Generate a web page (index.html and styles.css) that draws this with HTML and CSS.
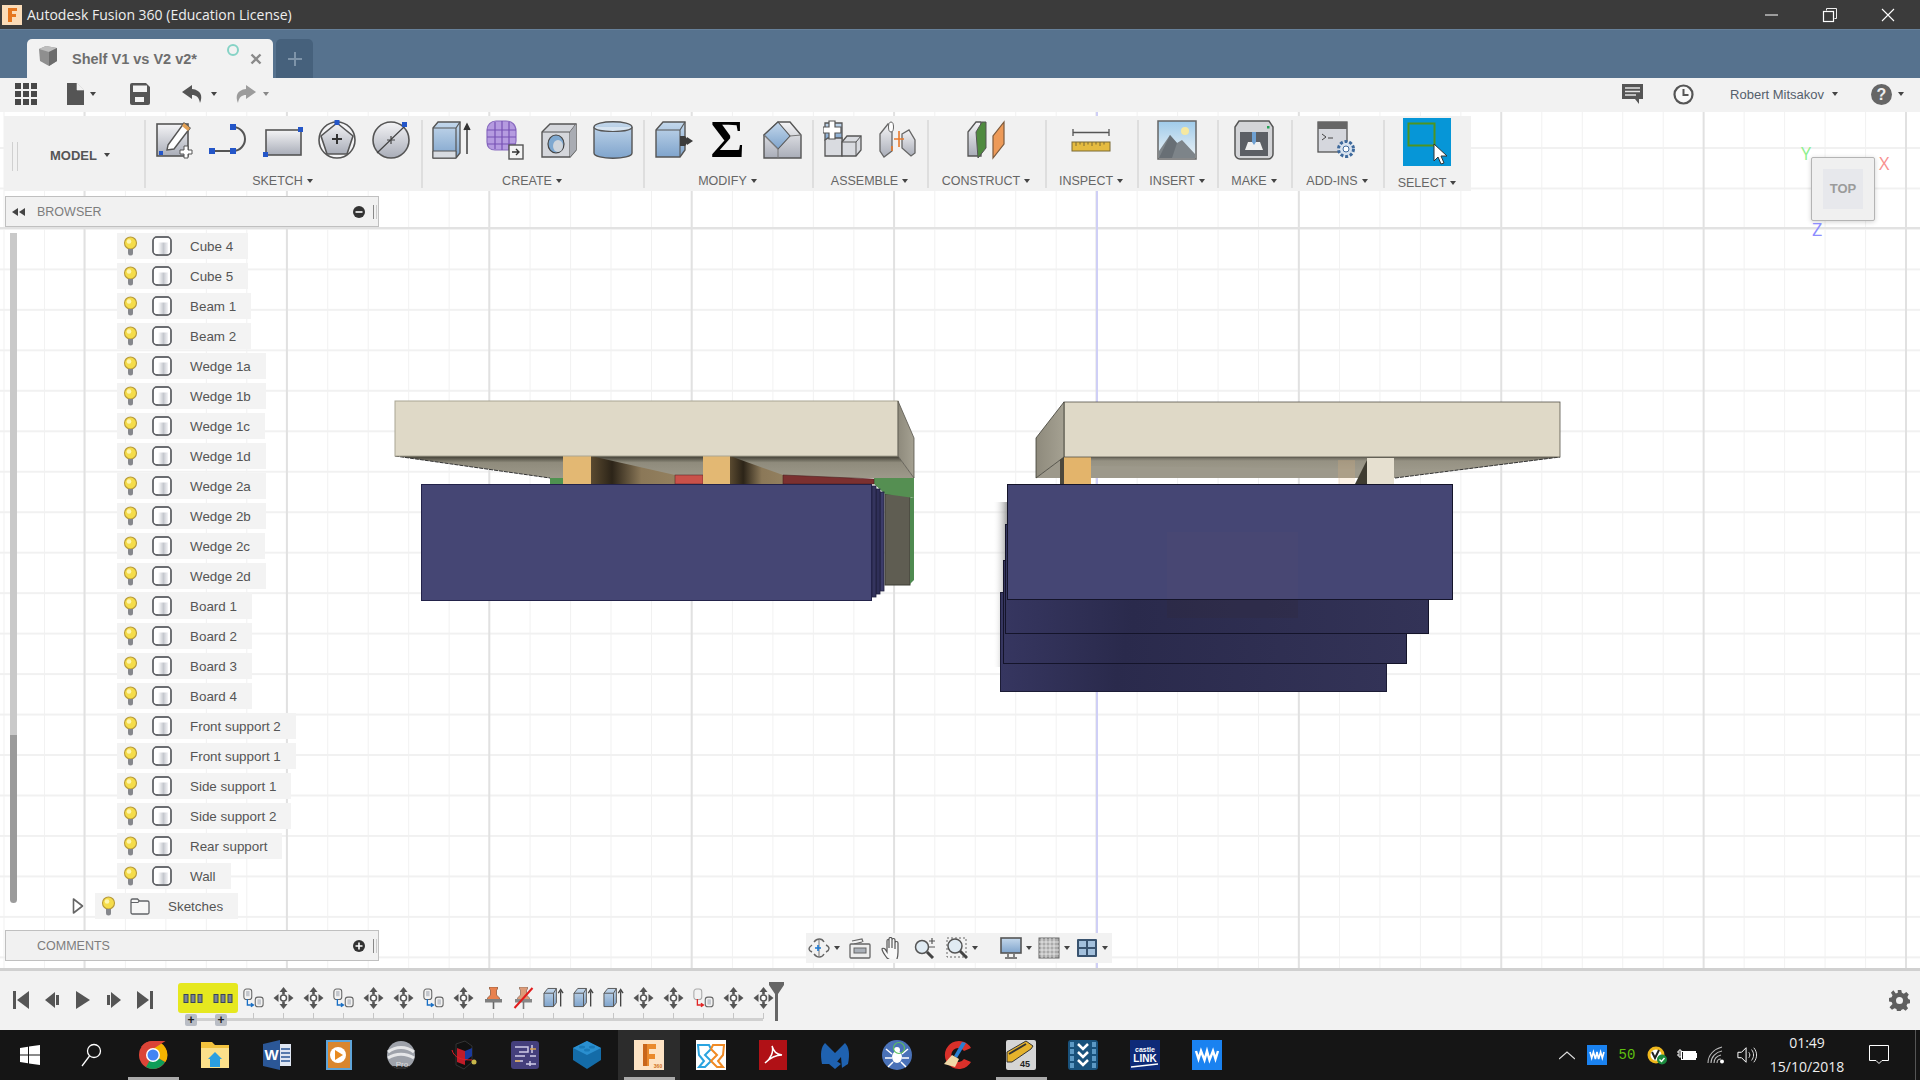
FILE: index.html
```html
<!DOCTYPE html>
<html lang="en">
<head>
<meta charset="utf-8">
<title>Autodesk Fusion 360 (Education License)</title>
<link rel="stylesheet" href="styles.css">
</head>
<body>
<svg class="defs" aria-hidden="true">
  <defs>
    <linearGradient id="gGrey" x1="0" y1="0" x2="0" y2="1"><stop offset="0" stop-color="#f4f4f6"/><stop offset="1" stop-color="#a9adb8"/></linearGradient>
    <linearGradient id="gBlue" x1="0" y1="0" x2="0" y2="1"><stop offset="0" stop-color="#c4d8ec"/><stop offset="1" stop-color="#7fa4cc"/></linearGradient>
    <linearGradient id="gBody" x1="0" y1="0" x2="1" y2="0"><stop offset="0" stop-color="#fff"/><stop offset=".55" stop-color="#c5c8ce"/><stop offset="1" stop-color="#f4f4f6"/></linearGradient>
    <linearGradient id="gSky" x1="0" y1="0" x2="0" y2="1"><stop offset="0" stop-color="#9fcbea"/><stop offset="1" stop-color="#eef3f5"/></linearGradient>
    <linearGradient id="gUnder" x1="0" y1="0" x2="0" y2="1"><stop offset="0" stop-color="#3c3a30"/><stop offset=".3" stop-color="#8f8b7c"/><stop offset="1" stop-color="#9d998a"/></linearGradient>
    <linearGradient id="gWedge" x1="0" y1="0" x2="1" y2="0"><stop offset="0" stop-color="#5a4a30"/><stop offset=".25" stop-color="#2c2418"/><stop offset=".6" stop-color="#8b7858"/><stop offset="1" stop-color="#93805f"/></linearGradient>
    <linearGradient id="gSide" x1="0" y1="0" x2="1" y2="0"><stop offset="0" stop-color="#8e8a7c"/><stop offset="1" stop-color="#a5a192"/></linearGradient>
    <linearGradient id="gBoard" x1="0" y1="0" x2="1" y2="0"><stop offset="0" stop-color="#363660"/><stop offset=".3" stop-color="#2a2a4c"/><stop offset="1" stop-color="#333357"/></linearGradient>
    <linearGradient id="gShadow" x1="0" y1="0" x2="1" y2="0"><stop offset="0" stop-color="#fff" stop-opacity="0"/><stop offset="1" stop-color="#888" stop-opacity=".8"/></linearGradient>

    <symbol id="i-bulb" viewBox="0 0 15 20"><circle cx="7.500" cy="7" r="6" fill="#f5dc4a" stroke="#b79a3a" stroke-width="1.100"/><circle cx="6" cy="5.500" r="2.300" fill="#fdf6b0"/><path d="M5 13h5v4a2.500 2.500 0 0 1-5 0z" fill="#85878c"/></symbol>
    <symbol id="i-body" viewBox="0 0 20 20"><rect x="1" y="1" width="18" height="18" rx="4" fill="#fff" stroke="#626468" stroke-width="1.4"/><path d="M6 6.5h10v10a2 2 0 0 1-2 2H6z" fill="url(#gBody)"/><rect x="1" y="1" width="18" height="18" rx="4" fill="none" stroke="#626468" stroke-width="1.4"/></symbol>
    <symbol id="i-folder" viewBox="0 0 20 18"><path d="M1 3.5a1.5 1.5 0 0 1 1.5-1.5h5l2 2h8a1.5 1.5 0 0 1 1.5 1.5v10a1.5 1.5 0 0 1-1.5 1.5h-15a1.5 1.5 0 0 1-1.5-1.5z" fill="#f6f6f6" stroke="#626468" stroke-width="1.3"/><path d="M1 5.5h7l1-1.5" fill="none" stroke="#626468" stroke-width="1.1"/></symbol>
    <symbol id="i-move" viewBox="0 0 20 22"><g fill="#555"><path d="M10 0l4 5h-8z"/><path d="M10 22l4-5h-8z"/><path d="M0 11l5-4v8z"/><path d="M20 11l-5-4v8z"/><rect x="8.7" y="4" width="2.6" height="3.5"/><rect x="8.7" y="14.5" width="2.6" height="3.5"/></g><circle cx="10" cy="11" r="3" fill="#fff" stroke="#555" stroke-width="1.5"/></symbol>
    <symbol id="i-joint" viewBox="0 0 24 22"><rect x="1" y="0.8" width="9" height="12" rx="3" fill="#f2f2f2" stroke="#666" stroke-width="1.2"/><rect x="3.5" y="3" width="4" height="6" fill="#c4c7cd"/><rect x="14" y="10" width="9" height="11" rx="3" fill="#f2f2f2" stroke="#666" stroke-width="1.2"/><rect x="16.5" y="12.5" width="4" height="6" fill="#c4c7cd"/><path d="M5 12v7h6M9 17l3 2-3 2" fill="none" stroke="#1a6fc4" stroke-width="1.5"/></symbol>
    <symbol id="i-joint-r" viewBox="0 0 24 22"><rect x="1" y="0.8" width="9" height="12" rx="3" fill="#f2f2f2" stroke="#a9a9a9" stroke-width="1.2"/><rect x="14" y="10" width="9" height="11" rx="3" fill="#f2f2f2" stroke="#666" stroke-width="1.2"/><rect x="16.5" y="12.5" width="4" height="6" fill="#c4c7cd"/><path d="M5 12v7h6M9 17l3 2-3 2" fill="none" stroke="#e12525" stroke-width="1.5"/></symbol>
    <symbol id="i-pin" viewBox="0 0 20 22"><path d="M6 0h8v2l-1 1v5l3 3v2H4v-2l3-3V3L6 2z" fill="#e8814e" stroke="#8f5b3c" stroke-width=".8"/><rect x="1.5" y="12" width="17" height="3.5" fill="#7e7e7e"/><rect x="9.2" y="15" width="1.6" height="7" fill="#666"/></symbol>
    <symbol id="i-pinx" viewBox="0 0 20 22"><path d="M6 0h8v2l-1 1v5l3 3v2H4v-2l3-3V3L6 2z" fill="#dd9a77" stroke="#8f7363" stroke-width=".8"/><rect x="1.5" y="12" width="17" height="3.5" fill="#888"/><rect x="9.2" y="15" width="1.6" height="7" fill="#777"/><path d="M1 21L19 1" stroke="#e21c1c" stroke-width="2"/></symbol>
    <symbol id="i-box" viewBox="0 0 22 22"><path d="M1 6l4-5h9v15l-3 4H1z" fill="url(#gBlue)" stroke="#555" stroke-width="1"/><path d="M1 6h10l3-5M11 6v14" fill="none" stroke="#555" stroke-width="1"/><path d="M18.5 20V4M16 6l2.5-4 2.5 4" fill="none" stroke="#444" stroke-width="1.4"/></symbol>
    <symbol id="i-seq" viewBox="0 0 20 9"><g fill="#7c8496" stroke="#37445a" stroke-width="1"><rect x="1" y=".5" width="4" height="8"/><rect x="8" y=".5" width="4" height="8"/><rect x="15" y=".5" width="4" height="8"/></g></symbol>
    <symbol id="i-gear" viewBox="0 0 24 24"><path fill="#5f5f5f" fill-rule="evenodd" d="M10 0h4l.7 3.2 2.3 1 2.8-1.8 2.8 2.8L21 8l1 2.3 2 .7v4l-3 .7-1 2.3 1.8 2.8-2.8 2.8-2.8-1.8-2.3 1-.7 2h-4l-.7-3-2.3-1-2.8 1.8-2.8-2.8L4 16l-1-2.3-3-.7v-4l3-.7 1-2.3-1.8-2.8 2.8-2.8L7.8 4l2.3-1zM12 8a4 4 0 1 0 0 8 4 4 0 0 0 0-8z"/></symbol>
  </defs>
</svg>

<div class="app">
  <header class="titlebar">
    <svg class="title-logo" viewBox="0 0 20 20"><rect width="20" height="20" fill="#fbdcb8"/><path d="M6 3h9v3H10v3h4v3h-4v5H6z" fill="#e5761e"/></svg>
    <span class="title-text">Autodesk Fusion 360 (Education License)</span>
    <div class="win-controls">
      <svg class="win-btn" viewBox="0 0 16 16"><path d="M1 8h13" stroke="#fff" stroke-width="1"/></svg>
      <svg class="win-btn" viewBox="0 0 16 16"><path d="M4.5 3.5V1.5h10v10h-2" fill="none" stroke="#eee"/><rect x="1.5" y="4.5" width="10" height="10" fill="none" stroke="#fff" stroke-width="1.2"/></svg>
      <svg class="win-btn" viewBox="0 0 16 16"><path d="M2 2l12 12M14 2L2 14" stroke="#fff" stroke-width="1.1"/></svg>
    </div>
  </header>

  <div class="tabbar">
    <div class="tab">
      <svg class="tab-cube" viewBox="0 0 22 22"><path d="M2 4l7-3 11 2v13l-8 5-9-5z" fill="#8f8f8f"/><path d="M2 4l10 3 8-4-11-2z" fill="#bdbdbd"/><path d="M12 7l8-4v13l-8 5z" fill="#6c6c6c"/></svg>
      <span class="tab-name">Shelf V1 vs V2 v2*</span>
      <span class="tab-ring"></span>
      <svg class="tab-close" viewBox="0 0 12 12"><path d="M1.5 1.5l9 9M10.5 1.5l-9 9" stroke="#8a8a8a" stroke-width="2.4"/></svg>
    </div>
    <div class="tab-new">
      <svg viewBox="0 0 14 14" class="tab-plus"><path d="M7 0v14M0 7h14" stroke="#7e94a9" stroke-width="2"/></svg>
    </div>
  </div>

  <div class="quickbar">
    <svg class="q-grid" viewBox="0 0 22 22"><path fill="#484848" d="M0 0h6v6H0zM8 0h6v6H8zM16 0h6v6h-6zM0 8h6v6H0zM8 8h6v6H8zM16 8h6v6h-6zM0 16h6v6H0zM8 16h6v6H8zM16 16h6v6h-6z"/></svg>
    <svg class="q-file" viewBox="0 0 17 22"><path fill="#555" d="M0 0h10l7 7v15H0z"/><path fill="#f2f2f2" d="M10 0v7h7z" stroke="#f2f2f2" stroke-width=".6"/></svg>
    <i class="caret caret-file"></i>
    <svg class="q-save" viewBox="0 0 20 22"><path fill="#555" d="M2 0h14l4 4v16a2 2 0 0 1-2 2H2a2 2 0 0 1-2-2V2a2 2 0 0 1 2-2z"/><rect x="3" y="2.5" width="14" height="6.5" fill="#f2f2f2"/><rect x="5" y="14" width="9" height="5" fill="#f2f2f2"/></svg>
    <svg class="q-undo" viewBox="0 0 22 18"><path fill="#555" d="M10 0L0 7l10 7v-4c4 0 7 2 8 8 3-7 1-13-8-14z"/></svg>
    <i class="caret caret-undo"></i>
    <svg class="q-redo" viewBox="0 0 22 18"><path fill="#9c9c9c" d="M12 0l10 7-10 7v-4C8 10 5 12 4 18 1 11 3 5 12 4z"/></svg>
    <i class="caret caret-redo"></i>
    <div class="q-right">
      <svg class="q-comment" viewBox="0 0 21 20"><path fill="#555" d="M0 0h21v15h-4v5l-4-5H0z"/><path d="M3 4h15M3 7.5h15M3 11h11" stroke="#e4e4e4" stroke-width="1.3"/></svg>
      <svg class="q-clock" viewBox="0 0 21 21"><circle cx="10.5" cy="10.5" r="9" fill="#f8f8f8" stroke="#555" stroke-width="2.2"/><path d="M10.5 5v6h5" fill="none" stroke="#555" stroke-width="2"/></svg>
      <span class="user-name">Robert Mitsakov</span>
      <i class="caret caret-user"></i>
      <span class="help">?</span>
      <i class="caret caret-help"></i>
    </div>
  </div>

  <main class="canvas">
    <svg class="model" viewBox="0 112 1920 856">
      <!-- left view -->
      <path d="M395 456H898L914 478H550z" fill="url(#gUnder)"/>
      <path d="M395 456L550 478" stroke="#333" stroke-width="1" stroke-dasharray="4 1"/>
      <rect x="885" y="494" width="25" height="91" fill="#5f5d52" stroke="#3f3e35"/>
      <path d="M910 498h4v82l-4 4z" fill="#4f8a50"/>
      <path d="M874 478L914 478V498L885 494L874 484z" fill="#558f52"/>
      <rect x="550" y="478" width="13" height="6" fill="#4f9250"/>
      <path d="M591 456L675 475V484H591z" fill="url(#gWedge)"/>
      <path d="M730 456L783 475V484H730z" fill="url(#gWedge)"/>
      <rect x="675" y="475" width="28" height="9" fill="#c9514a" stroke="#5c2b28" stroke-width=".6"/>
      <path d="M783 475L874 479V484H783z" fill="#7b3030" stroke="#4a2020" stroke-width=".6"/>
      <rect x="563" y="456" width="28" height="28" fill="#e3b873"/>
      <rect x="703" y="456" width="27" height="28" fill="#e3b873"/>
      <rect x="395" y="401" width="503" height="55" fill="#dfd9c7" stroke="#a9a594" stroke-width="1"/>
      <path d="M898 401L914 438V478L898 456z" fill="url(#gSide)" stroke="#55534a" stroke-width=".8"/>
      <rect x="880" y="492" width="4" height="99" fill="#3c3c6a" stroke="#1f1f3e" stroke-width=".8"/>
      <rect x="876" y="489" width="4" height="105" fill="#2f2f58" stroke="#1f1f3e" stroke-width=".8"/>
      <rect x="872" y="486" width="4" height="111" fill="#34345e" stroke="#1f1f3e" stroke-width=".8"/>
      <rect x="421.500" y="484.500" width="450" height="116" fill="#454674" stroke="#23234a"/>

      <!-- right view -->
      <rect x="993" y="502" width="14" height="165" fill="url(#gShadow)"/>
      <path d="M1036 478L1064 457H1560L1395 478z" fill="#9d998b"/>
      <path d="M1064 457H1560L1460 470L1091 466z" fill="url(#gUnder)" opacity=".55"/>
      <path d="M1395 478L1560 457" stroke="#333" stroke-width="1" stroke-dasharray="4 1"/>
      <path d="M1064 457L1091 457V466L1064 466z" fill="#4a463a"/>
      <path d="M1338 460H1355V484H1338z" fill="#e9b97d" opacity=".2"/>
      <path d="M1355 484L1367 460V484z" fill="#3f3c31"/>
      <rect x="1060" y="457" width="4" height="27" fill="#4c483c"/>
      <rect x="1064" y="457" width="27" height="27" fill="#e3b46b"/>
      <rect x="1367" y="458" width="27" height="26" fill="#e6e0d0"/>
      <rect x="1064" y="402" width="496" height="55" fill="#dfd9c7" stroke="#55534a" stroke-width=".8"/>
      <path d="M1064 402L1036 438V478L1064 457z" fill="url(#gSide)" stroke="#3e3c34" stroke-width=".8"/>
      <rect x="1000.500" y="592.500" width="386" height="99" fill="url(#gBoard)" stroke="#1c1c36"/>
      <rect x="1003.500" y="560.500" width="403" height="103" fill="url(#gBoard)" stroke="#14142a"/>
      <rect x="1005.500" y="524.500" width="423" height="109" fill="url(#gBoard)" stroke="#14142a"/>
      <rect x="1007.500" y="484.500" width="445" height="115" fill="#454674" stroke="#14142a"/>
      <rect x="1167" y="532" width="131" height="67" fill="#4e4c70" opacity=".3"/>
      <rect x="1167" y="600" width="131" height="18" fill="#2f2a40" opacity=".4"/>
    </svg>

    <div class="viewcube">
      <span class="axis axis-y">Y</span><span class="axis axis-x">X</span><span class="axis axis-z">Z</span>
      <span class="cube-face">TOP</span>
    </div>

    <section class="ribbon">
      <div class="group group-model">
        <span class="grip"></span>
        <span class="model-name">MODEL</span><i class="caret caret-model"></i>
      </div>
      <div class="group w-sketch">
        <div class="icons">
          <svg viewBox="0 0 40 40"><rect x="2" y="4" width="31" height="32" fill="url(#gGrey)" stroke="#555" stroke-width="1.6"/><rect x="4" y="31" width="4" height="4" fill="#2456c8"/><path d="M13 25L29 3l6 5-16 21-7 1z" fill="#fff" stroke="#555" stroke-width="1.4"/><path d="M29 3l6 5-2 3-6-5z" fill="#e2a054"/><path d="M25 30h4v-4h4v4h4v4h-4v4h-4v-4h-4z" fill="#fff" stroke="#555"/></svg>
          <svg viewBox="0 0 40 40"><path d="M3 31H24M24 7a12 12 0 0 1 0 24" fill="none" stroke="#555" stroke-width="2"/><g fill="#2456c8"><rect x="0" y="28" width="6" height="6"/><rect x="21" y="28" width="6" height="6"/><rect x="21" y="4" width="6" height="6"/></g></svg>
          <svg viewBox="0 0 40 40"><rect x="3" y="10" width="35" height="25" fill="url(#gGrey)" stroke="#555" stroke-width="1.6"/><rect x="35" y="7" width="5" height="5" fill="#2456c8"/><rect x="0" y="32" width="5" height="5" fill="#2456c8"/></svg>
          <svg viewBox="0 0 40 40"><circle cx="20" cy="20" r="18" fill="#f4f4f6" stroke="#555" stroke-width="1.6"/><path d="M20 3L36 16 30 34H10L4 16z" fill="url(#gGrey)" stroke="#555" stroke-width="1.6"/><path d="M20 14v10M15 19h10" stroke="#333" stroke-width="2"/><rect x="17.500" y="0" width="5" height="5" fill="#2456c8"/></svg>
          <svg viewBox="0 0 40 40"><circle cx="20" cy="20" r="18" fill="url(#gGrey)" stroke="#555" stroke-width="1.6"/><path d="M6 33L34 6M20 16v8M16 20h8" fill="none" stroke="#444" stroke-width="1.2"/><rect x="31" y="2" width="5" height="5" fill="#2456c8"/></svg>
        </div>
        <div class="group-label">SKETCH<i class="caret"></i></div>
      </div>
      <div class="group w-create">
        <div class="icons">
          <svg viewBox="0 0 40 40"><path d="M2 8l5-6h22v31l-4 5H2z" fill="url(#gBlue)" stroke="#555" stroke-width="1.4"/><path d="M2 8h23l4-6M25 8v30" fill="none" stroke="#555" stroke-width="1.2"/><path d="M2 31h23v7H2z" fill="#d8dce2" stroke="#555"/><path d="M36 34V6M33 10l3-6 3 6" fill="#333" stroke="#333" stroke-width="1.4"/></svg>
          <svg viewBox="0 0 40 40"><path d="M2 10c0-5 4-9 9-9h10c6 0 10 4 10 10v10c0 5-4 9-9 9H10c-5 0-8-3-8-8z" fill="#b59be0" stroke="#8a6cc0" stroke-width="1.2"/><path d="M2 10h29M2 17h29M2 24h28M10 2v27M17 1v29M24 2v28" stroke="#7752b4" stroke-width="1.2"/><rect x="24" y="25" width="14" height="14" fill="#f4f4f4" stroke="#555" stroke-width="1.4"/><path d="M27 32h7M31 29l3 3-3 3" fill="none" stroke="#333" stroke-width="1.4"/></svg>
          <svg viewBox="0 0 40 40"><path d="M3 12l8-8h26v26l-6 7H3z" fill="#d5d7dc" stroke="#555" stroke-width="1.4"/><path d="M3 12h28l6-8M31 12v25" fill="none" stroke="#555" stroke-width="1.1"/><path d="M31 12l6-8v26l-6 7z" fill="#a9acb3"/><ellipse cx="17" cy="24" rx="8" ry="9" fill="#7ea8d0" stroke="#444" stroke-width="1.2"/><ellipse cx="19" cy="26" rx="5" ry="6" fill="#cfd5dc"/></svg>
          <svg viewBox="0 0 40 40"><path d="M1 7c0-7 38-7 38 0v26c0 7-38 7-38 0z" fill="url(#gBlue)" stroke="#555" stroke-width="1.4"/><path d="M1 7c0 6 38 6 38 0" fill="#d7e4f1" stroke="#555" stroke-width="1.2"/></svg>
        </div>
        <div class="group-label">CREATE<i class="caret"></i></div>
      </div>
      <div class="group w-modify">
        <div class="icons">
          <svg viewBox="0 0 40 40"><path d="M2 10l7-8h22v28l-5 7H2z" fill="url(#gBlue)" stroke="#555" stroke-width="1.4"/><path d="M2 10h24l5-8M26 10v27" fill="none" stroke="#555" stroke-width="1.1"/><path d="M26 16h5l4 5-4 5h-5z" fill="#3c3c3c"/><path d="M33 17l6 4-6 4z" fill="#3c3c3c"/></svg>
          <span class="sigma">&#931;</span>
          <svg viewBox="0 0 40 40"><path d="M2 15L16 2h12l11 13v23H2z" fill="url(#gGrey)" stroke="#555" stroke-width="1.4"/><path d="M2 15L16 2l12 14-12 13z" fill="url(#gBlue)" stroke="#555" stroke-width="1.1"/><path d="M16 29L2 15M16 29v9M28 16L39 15" fill="none" stroke="#777"/></svg>
        </div>
        <div class="group-label">MODIFY<i class="caret"></i></div>
      </div>
      <div class="group w-assemble">
        <div class="icons">
          <svg viewBox="0 0 40 40"><path d="M2 3h17v17H2z" fill="url(#gBlue)" stroke="#555" stroke-width="1.3"/><path d="M2 20l3-2h14v18H2z" fill="#d9dbe0" stroke="#555" stroke-width="1.3"/><path d="M19 22l5-6h14v14l-5 6H19z" fill="#d9dbe0" stroke="#555" stroke-width="1.3"/><path d="M19 22h14l5-6M33 22v14" fill="none" stroke="#555"/><path d="M6 1h6v6h6v6h-6v6H6v-6H0V7h6z" fill="#fff" stroke="#555" stroke-width="1.2"/></svg>
          <svg viewBox="0 0 40 40"><path d="M3 14l8-10 4 3v24l-8 6-4-6z" fill="url(#gGrey)" stroke="#666" stroke-width="1.3"/><path d="M25 14l7-4 6 10v13l-4 3-9-8z" fill="url(#gGrey)" stroke="#666" stroke-width="1.3"/><ellipse cx="14" cy="7" rx="2.500" ry="5" fill="#fff" stroke="#666"/><path d="M22 11v16M17 19h10M15 26v5" stroke="#e87a2c" stroke-width="1.6"/></svg>
        </div>
        <div class="group-label">ASSEMBLE<i class="caret"></i></div>
      </div>
      <div class="group w-construct">
        <div class="icons">
          <svg viewBox="0 0 40 40"><path d="M2 12l8-10h5v34H2z" fill="url(#gGrey)" stroke="#555" stroke-width="1.3"/><path d="M10 12l6-10h4v26l-8 10z" fill="#4f8a3f" stroke="#555" stroke-width="1"/><path d="M27 38V16L38 2v22z" fill="#ed9a58" stroke="#7c5a3c" stroke-width="1.2"/></svg>
        </div>
        <div class="group-label">CONSTRUCT<i class="caret"></i></div>
      </div>
      <div class="group w-inspect">
        <div class="icons">
          <svg viewBox="0 0 40 40"><path d="M2 9v7M38 9v7M2 12.500h36" stroke="#555" stroke-width="1.3" fill="none"/><rect x="1" y="22" width="38" height="9" fill="#e5bb40" stroke="#7a6a35"/><path d="M5 22v4M9 22v2.500M13 22v4M17 22v2.500M21 22v4M25 22v2.500M29 22v4M33 22v2.500" stroke="#7a6a35"/></svg>
        </div>
        <div class="group-label">INSPECT<i class="caret"></i></div>
      </div>
      <div class="group w-insert">
        <div class="icons">
          <svg viewBox="0 0 40 40"><rect x="1" y="1" width="38" height="38" fill="url(#gSky)" stroke="#666" stroke-width="1.5"/><circle cx="28" cy="11" r="4" fill="#f6e8a0"/><path d="M2 38V31L13 15l7 8 5-3 13 14v4z" fill="#7d8489"/><path d="M13 15l7 8-5 15H2z" fill="#5f666c" opacity=".7"/></svg>
        </div>
        <div class="group-label">INSERT<i class="caret"></i></div>
      </div>
      <div class="group w-make">
        <div class="icons">
          <svg viewBox="0 0 40 40"><path d="M5 1h30l4 6v27a5 5 0 0 1-5 5H6a5 5 0 0 1-5-5V7z" fill="#d3d4d7" stroke="#555" stroke-width="1.5"/><path d="M6 12h28v24H6z" fill="#5c5f65"/><path d="M11 30l3-8h12l3 8z" fill="#f0f0f0"/><path d="M18 12h4v10l-2 3-2-3z" fill="#6ea0d2"/><rect x="33" y="6" width="2.500" height="2.500" fill="#22a055"/></svg>
        </div>
        <div class="group-label">MAKE<i class="caret"></i></div>
      </div>
      <div class="group w-addins">
        <div class="icons">
          <svg viewBox="0 0 40 40"><rect x="1" y="2" width="29" height="30" fill="#d5d7dd" stroke="#555" stroke-width="1.3"/><rect x="1" y="2" width="29" height="7" fill="#666"/><path d="M5 14l4 3-4 3M11 18h5" fill="none" stroke="#444"/><circle cx="29" cy="29" r="7.500" fill="#d7e2ef" stroke="#3f6a9c" stroke-width="3" stroke-dasharray="3 1.800"/><circle cx="29" cy="29" r="3" fill="#fff" stroke="#3f6a9c"/></svg>
        </div>
        <div class="group-label">ADD-INS<i class="caret"></i></div>
      </div>
      <div class="group w-select">
        <div class="icons">
          <svg class="select-icon" viewBox="0 0 48 48"><rect width="48" height="48" fill="#0696d7"/><rect x="5.500" y="5.500" width="26" height="22" fill="none" stroke="#4f9420" stroke-width="2"/><path d="M31 26v17l4-4 3 7 3-1-3-7h6z" fill="#fff" stroke="#333" stroke-width="1"/></svg>
        </div>
        <div class="group-label">SELECT<i class="caret"></i></div>
      </div>
    </section>

    <aside class="browser">
      <div class="panel-head">
        <svg class="rewind" viewBox="0 0 13 8"><path fill="#444" d="M6 0v8L0 4zM13 0v8L7 4z"/></svg>
        <span class="panel-title">BROWSER</span>
        <svg class="panel-btn" viewBox="0 0 12 12"><circle cx="6" cy="6" r="6" fill="#333"/><path d="M2.500 6h7" stroke="#fff" stroke-width="1.6"/></svg>
        <span class="panel-grip"></span>
      </div>
      <div class="tree">
        <div class="scrollbar"><span class="scroll-track"></span><span class="scroll-thumb"></span></div>
        <div class="row"><svg class="bulb"><use href="#i-bulb"/></svg><svg class="body"><use href="#i-body"/></svg><span>Cube 4</span></div>
        <div class="row"><svg class="bulb"><use href="#i-bulb"/></svg><svg class="body"><use href="#i-body"/></svg><span>Cube 5</span></div>
        <div class="row"><svg class="bulb"><use href="#i-bulb"/></svg><svg class="body"><use href="#i-body"/></svg><span>Beam 1</span></div>
        <div class="row"><svg class="bulb"><use href="#i-bulb"/></svg><svg class="body"><use href="#i-body"/></svg><span>Beam 2</span></div>
        <div class="row"><svg class="bulb"><use href="#i-bulb"/></svg><svg class="body"><use href="#i-body"/></svg><span>Wedge 1a</span></div>
        <div class="row"><svg class="bulb"><use href="#i-bulb"/></svg><svg class="body"><use href="#i-body"/></svg><span>Wedge 1b</span></div>
        <div class="row"><svg class="bulb"><use href="#i-bulb"/></svg><svg class="body"><use href="#i-body"/></svg><span>Wedge 1c</span></div>
        <div class="row"><svg class="bulb"><use href="#i-bulb"/></svg><svg class="body"><use href="#i-body"/></svg><span>Wedge 1d</span></div>
        <div class="row"><svg class="bulb"><use href="#i-bulb"/></svg><svg class="body"><use href="#i-body"/></svg><span>Wedge 2a</span></div>
        <div class="row"><svg class="bulb"><use href="#i-bulb"/></svg><svg class="body"><use href="#i-body"/></svg><span>Wedge 2b</span></div>
        <div class="row"><svg class="bulb"><use href="#i-bulb"/></svg><svg class="body"><use href="#i-body"/></svg><span>Wedge 2c</span></div>
        <div class="row"><svg class="bulb"><use href="#i-bulb"/></svg><svg class="body"><use href="#i-body"/></svg><span>Wedge 2d</span></div>
        <div class="row"><svg class="bulb"><use href="#i-bulb"/></svg><svg class="body"><use href="#i-body"/></svg><span>Board 1</span></div>
        <div class="row"><svg class="bulb"><use href="#i-bulb"/></svg><svg class="body"><use href="#i-body"/></svg><span>Board 2</span></div>
        <div class="row"><svg class="bulb"><use href="#i-bulb"/></svg><svg class="body"><use href="#i-body"/></svg><span>Board 3</span></div>
        <div class="row"><svg class="bulb"><use href="#i-bulb"/></svg><svg class="body"><use href="#i-body"/></svg><span>Board 4</span></div>
        <div class="row"><svg class="bulb"><use href="#i-bulb"/></svg><svg class="body"><use href="#i-body"/></svg><span>Front support 2</span></div>
        <div class="row"><svg class="bulb"><use href="#i-bulb"/></svg><svg class="body"><use href="#i-body"/></svg><span>Front support 1</span></div>
        <div class="row"><svg class="bulb"><use href="#i-bulb"/></svg><svg class="body"><use href="#i-body"/></svg><span>Side support 1</span></div>
        <div class="row"><svg class="bulb"><use href="#i-bulb"/></svg><svg class="body"><use href="#i-body"/></svg><span>Side support 2</span></div>
        <div class="row"><svg class="bulb"><use href="#i-bulb"/></svg><svg class="body"><use href="#i-body"/></svg><span>Rear support</span></div>
        <div class="row"><svg class="bulb"><use href="#i-bulb"/></svg><svg class="body"><use href="#i-body"/></svg><span>Wall</span></div>
        <div class="row-parent">
          <svg class="chevron" viewBox="0 0 12 18"><path d="M1.500 2v14L10.500 9z" fill="#fff" stroke="#666" stroke-width="1.6" stroke-linejoin="round"/></svg>
          <div class="row row-folder"><svg class="bulb"><use href="#i-bulb"/></svg><svg class="folder"><use href="#i-folder"/></svg><span>Sketches</span></div>
        </div>
      </div>
      <div class="panel-head">
        <span class="panel-title panel-title-plain">COMMENTS</span>
        <svg class="panel-btn" viewBox="0 0 12 12"><circle cx="6" cy="6" r="6" fill="#333"/><path d="M2.500 6h7M6 2.500v7" stroke="#fff" stroke-width="1.6"/></svg>
        <span class="panel-grip"></span>
      </div>
    </aside>

    <nav class="navbar">
      <div class="nav-btn">
        <svg viewBox="0 0 22 22"><path d="M6 5c3-4 8-4 10 0M6 17c3 4 8 4 10 0M4 8C0 11 0 13 4 15M18 8c4 2 4 5 0 7" fill="none" stroke="#666" stroke-width="1.4"/><path d="M11 3v16" stroke="#777"/><path d="M7 11h6M10 8v6" stroke="#1d78d0" stroke-width="1.6"/></svg><i class="caret"></i>
      </div>
      <div class="nav-btn gap-look">
        <svg viewBox="0 0 22 22"><path d="M3 4l10-2 1 3M5 7l8-2" fill="none" stroke="#666" stroke-width="1.2"/><rect x="1" y="7" width="20" height="14" rx="1" fill="#eee" stroke="#666" stroke-width="1.3"/><rect x="5" y="11" width="12" height="5" fill="#aab0b8" stroke="#666"/></svg>
      </div>
      <div class="nav-btn gap-hand">
        <svg viewBox="0 0 22 22"><path d="M6 21C3 17 1 14 1 12c0-1 2-1 3 0l2 3V4c0-2 2-2 2 0v7-9c0-2 3-2 3 0v9-8c0-2 3-2 3 0v9-6c0-2 3-2 3 0v9c0 5-1 8-3 11z" fill="#f8f8f8" stroke="#555" stroke-width="1.2"/></svg>
      </div>
      <div class="nav-btn gap-zoom">
        <svg viewBox="0 0 22 22"><circle cx="8" cy="10" r="6.500" fill="#e0ebf3" stroke="#555" stroke-width="1.5"/><path d="M13 15l6 6" stroke="#444" stroke-width="3"/><path d="M18 1v6M15 4h6M15 10h6" stroke="#555" stroke-width="1.2"/></svg>
      </div>
      <div class="nav-btn gap-fit">
        <svg viewBox="0 0 22 22"><rect x="1" y="1" width="19" height="19" fill="none" stroke="#666" stroke-dasharray="2 2"/><circle cx="9" cy="9" r="7" fill="#e0ebf3" stroke="#555" stroke-width="1.5"/><path d="M14 14l7 7" stroke="#444" stroke-width="3"/></svg><i class="caret"></i>
      </div>
      <div class="nav-btn gap-disp">
        <svg viewBox="0 0 22 22"><rect x="1" y="1" width="20" height="15" fill="url(#gBlue)" stroke="#555" stroke-width="1.6"/><path d="M8 17v3M14 17v3M5 21h12" stroke="#555" stroke-width="1.4"/></svg><i class="caret"></i>
      </div>
      <div class="nav-btn gap-grid">
        <svg viewBox="0 0 22 22"><rect x="1" y="1" width="20" height="20" fill="#aaa" stroke="#666"/><path d="M4 1v20M8 1v20M12 1v20M16 1v20M1 5h20M1 9h20M1 13h20M1 17h20" stroke="#f0f0f0" stroke-width=".8"/></svg><i class="caret"></i>
      </div>
      <div class="nav-btn gap-layout">
        <svg viewBox="0 0 22 22"><rect x="1" y="2" width="20" height="18" rx="1" fill="#39536f"/><rect x="3" y="4" width="7" height="6" fill="#a3c0dc"/><rect x="12" y="4" width="7" height="6" fill="#a3c0dc"/><rect x="3" y="12" width="7" height="6" fill="#a3c0dc"/><rect x="12" y="12" width="7" height="6" fill="#a3c0dc"/></svg><i class="caret"></i>
      </div>
    </nav>
  </main>

  <footer class="timeline">
    <div class="transport">
      <svg viewBox="0 0 16 18"><rect width="3" height="18" fill="#555"/><path d="M16 0v18L4 9z" fill="#555"/></svg>
      <svg viewBox="0 0 16 18"><path d="M11 1v16L1 9z" fill="#555"/><rect x="12" y="4" width="3" height="10" fill="#555"/></svg>
      <svg viewBox="0 0 16 18"><path d="M1 0v18l14-9z" fill="#555"/></svg>
      <svg viewBox="0 0 16 18"><path d="M5 1v16l10-8z" fill="#555"/><rect x="1" y="4" width="3" height="10" fill="#555"/></svg>
      <svg viewBox="0 0 16 18"><path d="M0 0v18l12-9z" fill="#555"/><rect x="13" width="3" height="18" fill="#555"/></svg>
    </div>
    <div class="track">
      <span class="rail"></span>
      <div class="step step-group step-group-a"><svg class="seq"><use href="#i-seq"/></svg><span class="token">+</span></div>
      <div class="step step-group step-group-b"><svg class="seq"><use href="#i-seq"/></svg><span class="token">+</span></div>
      <div class="step"><svg><use href="#i-joint"/></svg></div>
      <div class="step"><svg><use href="#i-move"/></svg></div>
      <div class="step"><svg><use href="#i-move"/></svg></div>
      <div class="step"><svg><use href="#i-joint"/></svg></div>
      <div class="step"><svg><use href="#i-move"/></svg></div>
      <div class="step"><svg><use href="#i-move"/></svg></div>
      <div class="step"><svg><use href="#i-joint"/></svg></div>
      <div class="step"><svg><use href="#i-move"/></svg></div>
      <div class="step"><svg><use href="#i-pin"/></svg></div>
      <div class="step"><svg><use href="#i-pinx"/></svg></div>
      <div class="step"><svg><use href="#i-box"/></svg></div>
      <div class="step"><svg><use href="#i-box"/></svg></div>
      <div class="step"><svg><use href="#i-box"/></svg></div>
      <div class="step"><svg><use href="#i-move"/></svg></div>
      <div class="step"><svg><use href="#i-move"/></svg></div>
      <div class="step"><svg><use href="#i-joint-r"/></svg></div>
      <div class="step"><svg><use href="#i-move"/></svg></div>
      <div class="step"><svg><use href="#i-move"/></svg></div>
      <svg class="playhead" viewBox="0 0 15 39"><path d="M0 0h15v3l-6 9v27H6V12L0 3z" fill="#666"/></svg>
    </div>
    <svg class="settings"><use href="#i-gear"/></svg>
  </footer>

  <div class="taskbar">
    <div class="tb-start"><svg viewBox="0 0 20 20"><path fill="#fff" d="M0 3l8-1.200V9.500H0zM9 1.600L20 0v9.500H9zM0 10.500h8v7.700L0 17zM9 10.500h11V20L9 18.400z"/></svg></div>
    <div class="tb-item"><svg viewBox="0 0 24 24"><circle cx="15" cy="8" r="6.500" fill="none" stroke="#fff" stroke-width="1.3"/><path d="M10.500 13L3 23" stroke="#fff" stroke-width="1.300"/></svg></div>
    <div class="tb-item tb-open"><svg viewBox="0 0 30 30"><circle cx="15" cy="15" r="14" fill="#db4437"/><path d="M15 15L27 22A14 14 0 0 1 8 27z" fill="#0f9d58"/><path d="M15 1A14 14 0 0 1 27.500 22L15 15z" fill="#f4b400"/><path d="M3 7A14 14 0 0 1 15 1h12.500L15 9z" fill="#db4437"/><circle cx="15" cy="15" r="7" fill="#fff"/><circle cx="15" cy="15" r="5.500" fill="#4285f4"/></svg></div>
    <div class="tb-item"><svg viewBox="0 0 30 30"><path d="M1 2h11l3 3h14v23H1z" fill="#f2c23e"/><path d="M1 8h28v20H1z" fill="#fbe08a"/><path d="M10 18h10v9H10z" fill="#2b9fe0"/><path d="M15 12l7 7H8z" fill="#2b9fe0"/></svg></div>
    <div class="tb-item"><svg viewBox="0 0 30 30"><path d="M1 4l17-4v30L1 26z" fill="#2b5797"/><path d="M18 4h11v22H18z" fill="#dfe6f2"/><path d="M19 9h9M19 13h9M19 17h9M19 21h9" stroke="#2b5797" stroke-width="1.500"/><text class="word-w" x="9.500" y="20" text-anchor="middle">W</text></svg></div>
    <div class="tb-item"><svg viewBox="0 0 30 30"><rect x="3" y="1" width="24" height="28" fill="#d9862e"/><rect x="3" y="1" width="24" height="28" fill="none" stroke="#5fa4d8" stroke-width="2"/><circle cx="14" cy="15" r="8" fill="#fff"/><path d="M11 10l8 5-8 5z" fill="#e88a1e"/></svg></div>
    <div class="tb-item"><svg viewBox="0 0 30 30"><circle cx="15" cy="15" r="14" fill="#9ea2aa"/><path d="M2 12c8-6 18-6 26 0M2 18c8-5 18-5 26 0" fill="none" stroke="#e5e6e8" stroke-width="3"/><path d="M6 26a14 14 0 0 0 18 0z" fill="#2a2a2a"/><text class="pro-t" x="16" y="27" text-anchor="middle">Pro</text></svg></div>
    <div class="tb-item"><svg viewBox="0 0 30 30"><path d="M8 4l9-3 7 5v16l-8 7-8-4z" fill="#111" stroke="#333"/><path d="M9 8l8 3v14l-8-3z" fill="#c01c28"/><path d="M17 11l7-3v8l-7 5z" fill="#1a3a9c"/><path d="M4 10c2 8 10 10 20 10" fill="none" stroke="#e01b24"/><circle cx="26" cy="22" r="2.500" fill="#c9b74a"/></svg></div>
    <div class="tb-item"><svg viewBox="0 0 30 30"><rect x="1" y="1" width="28" height="28" rx="3" fill="#443f7c"/><path d="M5 7h13v5H9M5 16h10M20 16h6M5 21h8M16 24h10M22 5v8M20 21v5" fill="none" stroke="#cfcde8" stroke-width="1.500"/><path d="M5 21h5M20 9h6" stroke="#d9a24a" stroke-width="1.500"/></svg></div>
    <div class="tb-item"><svg viewBox="0 0 30 30"><path d="M15 1l14 7v12L15 29 1 20V8z" fill="#146ca8"/><path d="M15 1l14 7-14 7L1 8z" fill="#2a8fcf"/><ellipse cx="10" cy="7" rx="3" ry="1.500" fill="#1a7ab8"/><ellipse cx="20" cy="7" rx="3" ry="1.500" fill="#1a7ab8"/><ellipse cx="15" cy="10" rx="3" ry="1.500" fill="#1a7ab8"/></svg></div>
    <div class="tb-item tb-active"><svg viewBox="0 0 30 30"><rect width="30" height="30" fill="#fde3c4"/><path d="M9 4h13v5h-7v5h6v5h-6v7H9z" fill="#ea8a2c"/><path d="M9 4h4v22H9z" fill="#c9661a"/><text class="tile-t" x="24" y="28" text-anchor="middle">360</text></svg></div>
    <div class="tb-item"><svg viewBox="0 0 30 30"><rect width="30" height="30" fill="#fff"/><path d="M2 5l11 0 2 4-6 6 6 6-6 6-6 0 5-6-5-6z" fill="none" stroke="#2aa4e0" stroke-width="2"/><path d="M28 5H17l-2 4 6 6-6 6 6 6h6l-5-6 5-6z" fill="none" stroke="#f08a24" stroke-width="2"/></svg></div>
    <div class="tb-item"><svg viewBox="0 0 30 30"><rect x="1" width="28" height="30" fill="#b01116"/><path d="M7 23c6-4 9-12 7-17 2 6 4 8 10 9-6 0-11 2-17 8z" fill="none" stroke="#fff" stroke-width="1.500"/></svg></div>
    <div class="tb-item"><svg viewBox="0 0 30 30"><path d="M2 24C0 14 1 7 5 3l10 10L25 3c4 4 5 11 3 21-3 2-5 3-6 4l-1-11-6 7z" fill="#1f62b0"/><path d="M9 24l6-4 6 4-6 5z" fill="#1f62b0"/></svg></div>
    <div class="tb-item"><svg viewBox="0 0 30 30"><circle cx="15" cy="15" r="15" fill="#4a72b8"/><ellipse cx="15" cy="17" rx="5" ry="6" fill="#fff"/><circle cx="15" cy="10" r="3" fill="#fff"/><path d="M10 14L4 9M10 18H3M11 22l-5 5M20 14l6-5M20 18h7M19 22l5 5" stroke="#fff" stroke-width="1.500"/><circle cx="17" cy="8" r="5.500" fill="none" stroke="#5cc05c" stroke-width="1.200"/></svg></div>
    <div class="tb-item"><svg viewBox="0 0 30 30"><path d="M27 8A14 14 0 1 0 27 22L20 19A7 7 0 1 1 20 11z" fill="#d9302a"/><path d="M18 2l4 1-9 15-3-2z" fill="#2a7fd2"/><path d="M8 15l7 4-4 8-11-3z" fill="#f0d9a8"/></svg></div>
    <div class="tb-item tb-open"><svg viewBox="0 0 30 30"><rect width="30" height="30" rx="2" fill="#d5d5d5"/><path d="M1 12L20 1l7 5-2 3-19 13H1z" fill="#e5b22c" stroke="#333"/><path d="M3 14l17-10" stroke="#333" stroke-width="2"/><text class="deg-t" x="19" y="27" text-anchor="middle">45</text></svg></div>
    <div class="tb-item"><svg viewBox="0 0 30 30"><rect width="30" height="30" rx="3" fill="#19527c"/><path d="M2 2h4v5H2zM2 9h4v5H2zM2 16h4v5H2zM2 23h4v5H2zM24 2h4v5h-4zM24 9h4v5h-4zM24 16h4v5h-4zM24 23h4v5h-4z" fill="#5c99c4"/><path d="M10 4l5 5 5-5M10 12l5 5 5-5M10 20l5 5 5-5" fill="none" stroke="#fff" stroke-width="2.500"/></svg></div>
    <div class="tb-item"><svg viewBox="0 0 30 30"><rect width="30" height="30" fill="#0e2a78"/><text class="cl-t" x="15" y="12" text-anchor="middle">castle</text><text class="cl-b" x="15" y="22" text-anchor="middle">LINK</text><path d="M1 27l27-3" stroke="#fff" stroke-width="1.500"/></svg></div>
    <div class="tb-item"><svg viewBox="0 0 30 30"><rect width="30" height="30" fill="#1a82f0"/><path d="M4 11l2.500 8 2.500-8 3.500 9 2.500-9 2.500 9 3.500-9 2.500 8 2.500-8" fill="none" stroke="#fff" stroke-width="2.400"/></svg></div>
    <div class="tray">
      <div class="tray-item"><svg viewBox="0 0 16 9"><path d="M0 8l8-7 8 7" fill="none" stroke="#ddd" stroke-width="1.200"/></svg></div>
      <div class="tray-item"><svg class="tray-wide" viewBox="0 0 20 20"><rect width="20" height="20" fill="#1a82f0"/><path d="M3 7l1.700 6 1.700-6 2 7 1.600-7 1.600 7 2-7 1.700 6 1.700-6" fill="none" stroke="#fff" stroke-width="1.600"/></svg></div>
      <div class="tray-item tray-num">50</div>
      <div class="tray-item"><svg class="tray-wide" viewBox="0 0 20 20"><circle cx="9" cy="10" r="8.500" fill="#f0b81c"/><circle cx="9" cy="10" r="5.500" fill="#fff"/><path d="M5 7l3 6 4-8" fill="none" stroke="#222" stroke-width="2"/><circle cx="15" cy="14.500" r="5" fill="#1b8a3e"/><path d="M12.500 14.500l2 2 3-3.500" fill="none" stroke="#fff" stroke-width="1.400"/></svg></div>
      <div class="tray-item"><svg class="tray-wide" viewBox="0 0 20 14"><path d="M0 4h2M0 7h2M2 2h2v7H2zM4 5h3" stroke="#fff" fill="none"/><rect x="4" y="3" width="15" height="9" fill="#fff"/><rect x="5" y="4" width="1" height="7" fill="#151515"/><rect x="19" y="5" width="1" height="5" fill="#fff"/></svg></div>
      <div class="tray-item"><svg class="tray-wide" viewBox="0 0 20 18"><path d="M1 17C1 9 7 3 15 1M4 17C4 11 9 6 15 5M7 17c0-4 3-7 7-8M10 17c0-2 1-4 4-4" fill="none" stroke="#bbb" stroke-width="1.100"/><circle cx="15" cy="15.500" r="2" fill="#fff"/></svg></div>
      <div class="tray-item"><svg class="tray-wide" viewBox="0 0 22 18"><path d="M1 6h4l5-5v16l-5-5H1z" fill="none" stroke="#fff" stroke-width="1.100"/><path d="M13 6c1.500 2 1.500 4 0 6M16 3c3 4 3 8 0 12M18.500 1c4 5 4 11 0 16" fill="none" stroke="#ddd" stroke-width="1.100"/></svg></div>
      <div class="clock"><span>01:49</span><span>15/10/2018</span></div>
      <div class="notify"><svg viewBox="0 0 20 20"><path d="M.500 .500h19v15h-6.500l-3 3-3-3H.500z" fill="none" stroke="#fff" stroke-width="1"/></svg></div>
    </div>
  </div>
</div>
</body>
</html>
```
FILE: styles.css
```css
* { box-sizing: border-box; }
html, body { margin: 0; padding: 0; }
body { width: 1920px; height: 1080px; overflow: hidden; font-family: "Liberation Sans", Arial, sans-serif; color: #555; }
.defs { position: absolute; width: 0; height: 0; }
.app { display: flex; flex-direction: column; height: 1080px; }

/* title bar */
.titlebar { height: 29px; flex: none; background: #3b3b3b; display: flex; align-items: center; }
.title-logo { width: 20px; height: 20px; margin-left: 2px; }
.title-text { margin-left: 5px; font: 14px/29px "Open Sans", sans-serif; color: #eee; }
.win-controls { margin-left: auto; display: flex; }
.win-btn { width: 16px; height: 16px; margin-left: 42px; }
.win-btn:last-child { margin-right: 24px; }

/* document tabs */
.tabbar { height: 49px; flex: none; background: #56728e; display: flex; padding: 9px 0 0 27px; gap: 3px; border-top: 1px solid #66809a; }
.tab { width: 246px; background: #f2f2f2; border-radius: 5px 5px 0 0; display: flex; align-items: center; position: relative; }
.tab-cube { width: 22px; height: 22px; margin: -6px 0 0 10px; }
.tab-name { margin-left: 13px; font-weight: bold; font-size: 14.500px; color: #6e6e6e; }
.tab-ring { position: absolute; left: 200px; top: 5px; width: 12px; height: 12px; border: 2px solid #86d3c6; border-radius: 50%; }
.tab-close { position: absolute; left: 223px; top: 14px; width: 12px; height: 12px; }
.tab-new { width: 37px; background: #46617c; border-radius: 5px 5px 0 0; display: flex; align-items: center; justify-content: center; }
.tab-plus { width: 14px; height: 14px; }

/* quick access bar */
.quickbar { height: 34px; flex: none; background: #f2f2f2; display: flex; align-items: center; padding-bottom: 2px; }
.q-grid { width: 22px; height: 22px; margin-left: 15px; }
.q-file { width: 17px; height: 22px; margin-left: 30px; }
.q-save { width: 20px; height: 22px; margin-left: 34px; }
.q-undo { width: 22px; height: 18px; margin-left: 32px; }
.q-redo { width: 22px; height: 18px; margin-left: 17px; }
.q-right { margin-left: auto; display: flex; align-items: center; }
.q-comment { width: 21px; height: 20px; }
.q-clock { width: 21px; height: 21px; margin-left: 30px; }
.user-name { margin-left: 36px; font-size: 13px; color: #555f6c; }
.help { margin-left: 33px; width: 21px; height: 21px; border-radius: 50%; background: #666; color: #eee; font-weight: bold; font-size: 16px; line-height: 21px; text-align: center; }

.caret { display: inline-block; width: 0; height: 0; border: 3.500px solid transparent; border-top: 4.500px solid #444; border-bottom: 0; margin-left: 4px; vertical-align: 2px; }
.caret-file { margin-left: 6px; }
.caret-undo { margin-left: 7px; }
.caret-redo { margin-left: 7px; border-top-color: #888; }
.caret-user { margin-left: 8px; }
.caret-help { margin-left: 6px; margin-right: 16px; }
.caret-model { margin-left: 7px; margin-top: 2px; }

/* canvas */
.canvas {
  flex: 1; position: relative; overflow: hidden; background-color: #fff;
  background-image:
    linear-gradient(#cfcff6, #cfcff6),
    linear-gradient(#e2e2e2, #e2e2e2),
    linear-gradient(90deg, #e1e1e1 2px, transparent 2px),
    linear-gradient(90deg, #f1f1f1 1px, transparent 1px),
    linear-gradient(#f1f1f1 2px, transparent 2px);
  background-size: 2px 100%, 100% 2px, 202.400px 100%, 40.480px 100%, 100% 40.480px;
  background-position: 1096px 0, 0 115px, 83.500px 0, 3.500px 0, 0 35px;
  background-repeat: no-repeat, no-repeat, repeat-x, repeat-x, repeat-y;
}
.model { position: absolute; left: 0; top: 0; width: 1920px; height: 856px; }

/* view cube */
.viewcube { position: absolute; left: 1811px; top: 45px; width: 64px; height: 64px; background: #f0f0f0; border: 1.500px solid #b4b4b4; border-radius: 2px; box-shadow: 0 1px 5px rgba(0,0,0,.18); display: flex; align-items: center; justify-content: center; }
.cube-face { width: 40px; height: 40px; background: #e7e8ec; color: #9b9b9b; font: bold 13px/40px "Liberation Sans", sans-serif; text-align: center; }
.axis { position: absolute; font: 18px/18px "Open Sans", sans-serif; }
.axis-y { left: -11px; top: -14px; color: #8ef08e; }
.axis-x { left: 67px; top: -4px; color: #f89090; }
.axis-z { left: 0; top: 62px; color: #8c8cff; }

/* ribbon */
.ribbon { position: absolute; left: 4px; top: 4px; width: 1467px; height: 75px; background: #f1f1f1; display: flex; }
.group { display: flex; flex-direction: column; align-items: center; margin: 4px 0 3px; border-left: 2px solid #dedede; padding-right: 2px; flex: none; }
.icons { height: 42px; display: flex; gap: 14px; align-items: center; }
.icons svg { width: 40px; height: 40px; }
.icons .select-icon { width: 48px; height: 48px; margin-top: 2px; }
.group-label { margin-top: 13px; font-size: 12.500px; line-height: 16px; color: #666; white-space: nowrap; }
.group-model { width: 140px; flex-direction: row; border-left: 0; }
.grip { width: 6px; height: 29px; margin-left: 8px; border-left: 1.500px solid #d0d0d0; border-right: 1.500px solid #d0d0d0; margin-top: 4px; }
.model-name { margin-left: 32px; margin-top: 2px; font-size: 13px; font-weight: bold; color: #555; }
.w-sketch { width: 277px; }
.w-create { width: 222px; }
.w-modify { width: 169px; }
.w-assemble { width: 115px; }
.w-construct { width: 118px; }
.w-inspect { width: 92px; }
.w-insert { width: 80px; }
.w-make { width: 74px; }
.w-addins { width: 92px; }
.w-select { width: 88px; }
.sigma { width: 40px; height: 40px; text-align: center; font: bold 52px/40px "Liberation Serif", serif; color: #000; }

/* browser panel */
.browser { position: absolute; left: 5px; top: 84px; width: 374px; height: 765px; display: flex; flex-direction: column; }
.panel-head { height: 31px; flex: none; background: #f1f1f1; border: 1px solid #c0c0c0; display: flex; align-items: center; padding-left: 6px; }
.rewind { width: 13px; height: 8px; }
.panel-title { margin-left: 12px; font-size: 12.500px; color: #7d7d7d; }
.panel-title-plain { margin-left: 25px; }
.panel-btn { width: 12px; height: 12px; margin-left: auto; }
.panel-grip { width: 4px; height: 14px; margin: 0 1px 0 8px; border-left: 1px solid #888; border-right: 1px solid #ccc; }
.tree { flex: 1; position: relative; padding: 6px 0 0 112px; display: flex; flex-direction: column; gap: 4px; }
.scrollbar { position: absolute; left: 5px; top: 6px; width: 7px; height: 670px; display: flex; flex-direction: column; }
.scroll-track { height: 502px; background: #c9c9c9; }
.scroll-thumb { flex: 1; background: #9b9b9b; border-radius: 0 0 4px 4px; }
.row { height: 26px; width: fit-content; display: flex; align-items: center; background: #f3f3f3; padding: 0 15px 0 6px; font-size: 13.400px; color: #555; white-space: nowrap; }
.bulb { width: 15px; height: 20px; margin-right: 1px; flex: none; }
.body { width: 20px; height: 20px; margin-left: 13px; flex: none; }
.folder { width: 20px; height: 18px; margin-left: 13px; flex: none; }
.row span { margin-left: 18px; }
.row-parent { display: flex; align-items: center; margin-left: -44px; height: 26px; }
.chevron { width: 12px; height: 18px; margin-left: -1px; margin-right: 11px; flex: none; }
.row-folder { padding-right: 15px; }

/* bottom-centre navigation bar */
.navbar { position: absolute; left: 806px; top: 821px; width: 306px; height: 30px; background: #f2f2f2; display: flex; align-items: center; padding-left: 2px; }
.nav-btn { display: flex; align-items: center; }
.nav-btn svg { width: 22px; height: 22px; }
.nav-btn .caret { margin-left: 4px; }
.gap-look { margin-left: 9px; }
.gap-hand { margin-left: 10px; }
.gap-zoom { margin-left: 11px; }
.gap-fit { margin-left: 10px; }
.gap-disp { margin-left: 22px; }
.gap-grid { margin-left: 6px; }
.gap-layout { margin-left: 6px; }

/* timeline */
.timeline { height: 62px; flex: none; background: #f2f2f2; border-top: 3px solid #d0d0d0; display: flex; align-items: flex-start; padding-left: 13px; }
.transport { display: flex; gap: 15px; margin-top: 20px; width: 165px; }
.transport svg { width: 16px; height: 18px; }
.track { position: relative; display: flex; width: 600px; margin-top: 12px; }
.rail { position: absolute; left: 12px; top: 35px; width: 573px; height: 3px; background: #d0d0d0; }
.step { width: 30px; height: 30px; display: flex; align-items: center; justify-content: center; position: relative; }
.step svg { width: 21px; height: 22px; }
.step::after { content: ""; position: absolute; left: 15px; top: 30px; width: 1px; height: 6px; background: #c6c6c6; }
.step-group { background: #e6e81f; }
.step-group::after { display: none; }
.step-group-a { border-radius: 3px 0 0 3px; }
.step-group-b { border-radius: 0 3px 3px 0; }
.step .seq { width: 20px; height: 9px; }
.token { position: absolute; left: 7px; top: 31px; width: 12px; height: 12px; background: #b9bdc5; border-radius: 2px; color: #222; font: bold 12px/12px "Liberation Sans", sans-serif; text-align: center; }
.playhead { position: absolute; left: 591px; top: -1px; width: 15px; height: 39px; }
.settings { width: 21px; height: 21px; margin: 19px 10px 0 auto; }

/* taskbar */
.taskbar { height: 50px; flex: none; background: #151515; display: flex; }
.tb-start { width: 60px; display: flex; align-items: center; justify-content: center; }
.tb-start svg { width: 20px; height: 20px; }
.tb-item { width: 62px; position: relative; display: flex; align-items: center; justify-content: center; }
.tb-item svg { width: 30px; height: 30px; }
.tb-start + .tb-item svg { width: 24px; height: 24px; }
.tb-open::after, .tb-active::after { content: ""; position: absolute; left: 6px; right: 5px; bottom: 0; height: 3px; background: #aaa; }
.tb-active { background: #2c2c2c; }
.word-w { font: bold 15px "Liberation Sans", sans-serif; fill: #fff; }
.pro-t { font: 8px "Liberation Sans", sans-serif; fill: #ddd; }
.tile-t { font: bold 5px "Liberation Sans", sans-serif; fill: #d07020; }
.deg-t { font: bold 9px "Liberation Sans", sans-serif; fill: #222; }
.cl-t { font: bold 7px "Liberation Sans", sans-serif; fill: #fff; }
.cl-b { font: bold 10px "Liberation Sans", sans-serif; fill: #fff; }

.tray { margin-left: auto; margin-right: 4px; display: flex; align-items: center; height: 50px; padding-right: 9px; border-right: 1px solid #555; }
.tray-item { width: 30px; height: 50px; display: flex; align-items: center; justify-content: center; }
.tray-item svg { width: 16px; height: 9px; }
.tray-item .tray-wide { width: 20px; height: 20px; }
.tray-num { color: #5fbf10; font: 14px "Liberation Mono", monospace; }
.clock { width: 90px; display: flex; flex-direction: column; align-items: center; gap: 6px; font: 14px/18px "Open Sans", sans-serif; color: #eee; }
.notify { width: 54px; display: flex; align-items: center; justify-content: center; }
.notify svg { width: 20px; height: 20px; }
```
